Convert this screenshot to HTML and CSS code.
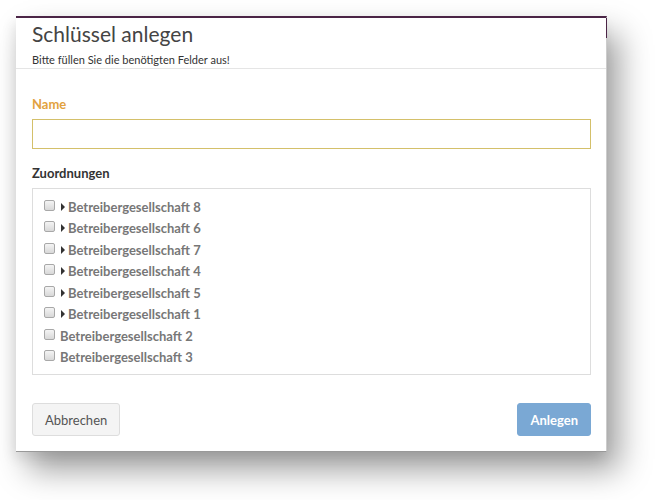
FILE: index.html
```html
<!DOCTYPE html>
<html>
<head>
    <title>Schlüssel anlegen</title>
    <link rel="stylesheet" href="styles.css">
</head>
<body>
    <div class="modal">
        <div class="modal-header">
            <h1>Schlüssel anlegen</h1>
            <p>Bitte füllen Sie die benötigten Felder aus!</p>
        </div>

        <div class="modal-body">
            <label class="label label-required">Name</label>
            <input type="text" class="input">

            <label class="label">Zuordnungen</label>
            <div class="tree">
                <div class="node"><span class="check"></span><span class="caret"></span>Betreibergesellschaft 8</div>
                <div class="node"><span class="check"></span><span class="caret"></span>Betreibergesellschaft 6</div>
                <div class="node"><span class="check"></span><span class="caret"></span>Betreibergesellschaft 7</div>
                <div class="node"><span class="check"></span><span class="caret"></span>Betreibergesellschaft 4</div>
                <div class="node"><span class="check"></span><span class="caret"></span>Betreibergesellschaft 5</div>
                <div class="node"><span class="check"></span><span class="caret"></span>Betreibergesellschaft 1</div>
                <div class="node leaf"><span class="check"></span>Betreibergesellschaft 2</div>
                <div class="node leaf"><span class="check"></span>Betreibergesellschaft 3</div>
            </div>
        </div>

        <div class="modal-footer">
            <button class="btn">Abbrechen</button>
            <button class="btn btn-primary">Anlegen</button>
        </div>
    </div>
</body>
</html>
```

FILE: styles.css
```css
html, body {
    min-height: 500px;
}
body {
    margin: 0;
    padding: 16px 0 48px 16px;
    box-sizing: border-box;
    background: #fff;
    font-family: Lato, "Open Sans", sans-serif;
}
.modal {
    position: relative;
    width: 591px;
    height: 436px;
    box-sizing: border-box;
    background: #fff;
    border-top: 2px solid #4b2546;
    border-bottom: 1px solid #999;
    border-right: 1px solid #ccc;
    box-shadow: 12px 18px 30px rgba(0, 0, 0, 0.38), -3px 6px 12px rgba(0, 0, 0, 0.08);
    display: flex;
    flex-direction: column;
}
.modal::after {
    content: "";
    position: absolute;
    right: -1px;
    top: 0;
    width: 1px;
    height: 20px;
    background: #4b2546;
}
.modal-header {
    padding: 2px 16px 1px;
    border-bottom: 1px solid #e5e5e5;
}
.modal-header h1 {
    margin: 0;
    font-size: 21px;
    line-height: 28px;
    font-weight: 400;
    color: #444;
}
.modal-header p {
    margin: 5px 0 0;
    font-size: 11px;
    line-height: 14px;
    color: #333;
}
.modal-body {
    padding: 26px 15px 0 16px;
    display: flex;
    flex-direction: column;
}
.label {
    font-size: 13px;
    line-height: 18px;
    font-weight: 700;
    color: #333;
}
.label-required {
    color: #e2a23f;
}
.input {
    margin: 6px 0 15px;
    height: 30px;
    box-sizing: border-box;
    border: 1px solid #d4c06a;
    background: #fff;
    outline: none;
}
.tree {
    margin-top: 6px;
    height: 187px;
    box-sizing: border-box;
    border: 1px solid #ddd;
    padding: 7px 11px;
}
.node {
    display: flex;
    align-items: center;
    height: 21.5px;
    font-size: 13px;
    font-weight: 700;
    color: #777;
}
.check {
    width: 11px;
    height: 11px;
    box-sizing: border-box;
    border: 1px solid #a8a8a8;
    border-radius: 2px;
    background: linear-gradient(#f4f4f4, #d8d8d8);
    margin-right: 6px;
    margin-top: -3px;
}
.leaf .check {
    margin-right: 5px;
}
.caret {
    width: 0;
    height: 0;
    border-top: 4px solid transparent;
    border-bottom: 4px solid transparent;
    border-left: 4px solid #333;
    margin-right: 3px;
}
.modal-footer {
    margin-top: auto;
    padding: 0 15px 15px 16px;
    display: flex;
    justify-content: space-between;
}
.btn {
    height: 33px;
    padding: 0 12px;
    font-family: Lato, "Open Sans", sans-serif;
    font-size: 13px;
    color: #555;
    background: #f4f4f4;
    border: 1px solid #ddd;
    border-radius: 3px;
}
.btn-primary {
    background: #7aa8d4;
    border-color: #7aa8d4;
    color: #fff;
    font-weight: 700;
}
```
